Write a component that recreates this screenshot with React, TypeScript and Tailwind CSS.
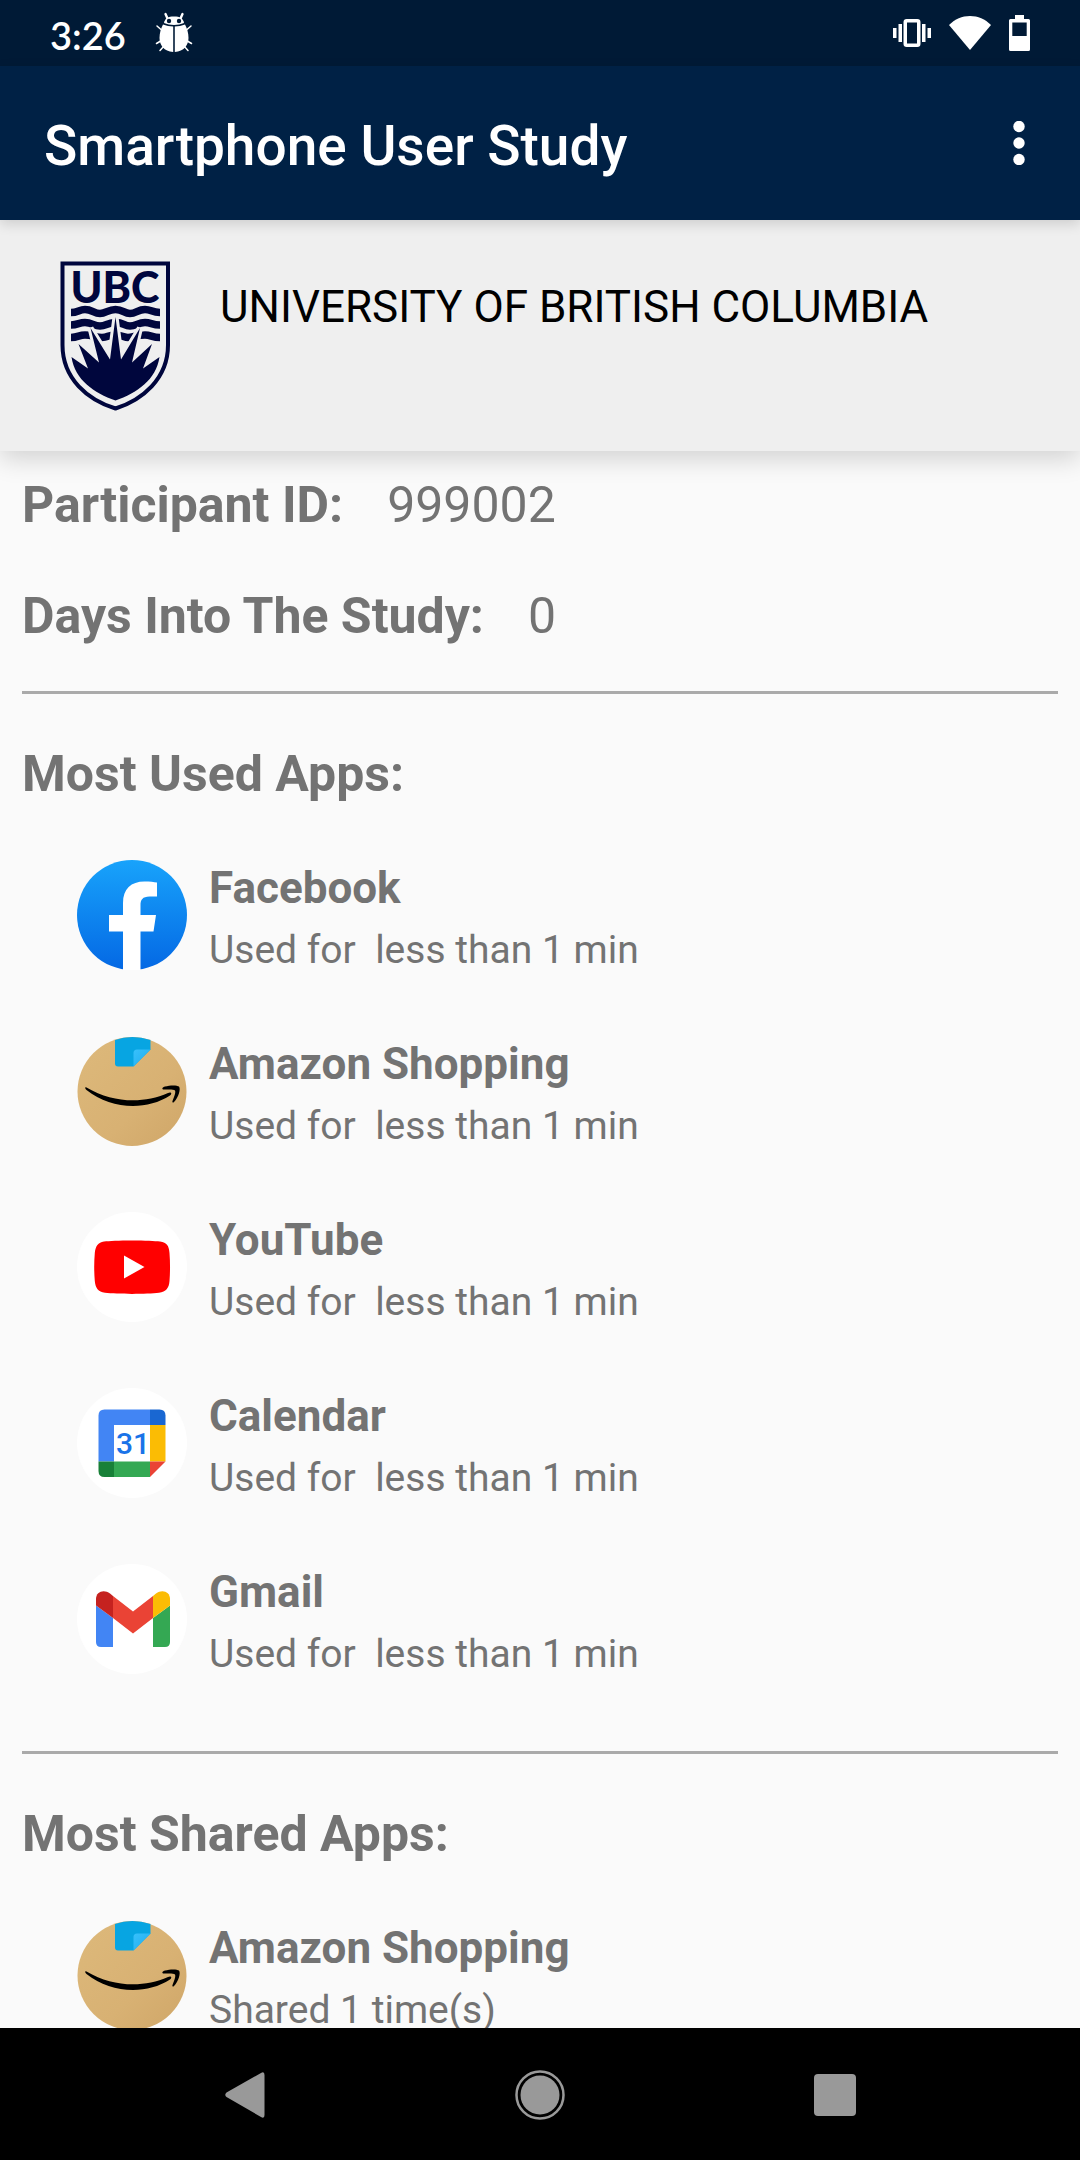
import React from "react";

function BugIcon() {
  return (
    <svg viewBox="0 0 38 42" className="h-[42px] w-[38px]" aria-hidden="true">
      <g stroke="#fff" strokeWidth="1.5" fill="none" strokeLinecap="round">
        <path d="M10.500 2l2 4.500M27.500 2l-2 4.500" strokeWidth="2.400" />
        <path d="M2 14l4 3.500M36 14l-4 3.500M1.500 31.500l5-3M36.500 31.500l-5-3M5 38.500l4-4.500M33 38.500l-4-4.500" />
      </g>
      <path d="M9 11C10 6 13 4.500 19 4.500S28 6 29 11C23 13.500 15 13.500 9 11z" fill="#fff" />
      <path d="M8 12.500c3 1.200 7 1.900 10.200 2V40C9 39.500 4.500 33 4.500 26c0-5 1.500-10 3.500-13.500zM30 12.500c-3 1.200-7 1.900-10.200 2V40C29 39.500 33.500 33 33.500 26c0-5-1.500-10-3.500-13.500z" fill="#fff" />
      <circle cx="14" cy="9" r="2.200" fill="#001a36" />
      <circle cx="24" cy="9" r="2.200" fill="#001a36" />
    </svg>
  );
}

function VibrateIcon() {
  return (
    <svg viewBox="0 0 38 28" className="h-[28px] w-[38px]" aria-hidden="true">
      <rect x="12.250" y="1.750" width="13.500" height="24.500" rx="1.500" fill="none" stroke="#fff" strokeWidth="3.500" />
      <path d="M0 9h3.500v10H0zM5.500 5H9v18H5.500zM29 5h3.500v18H29zM34.500 9H38v10h-3.500z" fill="#fff" />
    </svg>
  );
}

function WifiIcon() {
  return (
    <svg viewBox="0 0 42 34" className="h-[34px] w-[42px]" aria-hidden="true">
      <path d="M0 9C6 3 13 0 21 0s15 3 21 9L21 34z" fill="#fff" />
    </svg>
  );
}

function BatteryIcon() {
  return (
    <svg viewBox="0 0 21 36" className="h-[36px] w-[21px]" aria-hidden="true">
      <path fillRule="evenodd" d="M6 0h9v4h4.500Q21 4 21 5.500v29Q21 36 19.500 36h-18Q0 36 0 34.500v-29Q0 4 1.500 4H6zM3.300 7.500V21h14.400V7.500z" fill="#fff" />
    </svg>
  );
}

function UbcLogo() {
  return (
    <svg viewBox="0 0 110 150" className="h-[150px] w-[110px] shrink-0" role="img" aria-label="UBC crest">
      <path d="M2.500 2.500H108V84C108 118 82 139 55.500 147.500C28 139 2.500 118 2.500 84z" fill="none" stroke="#00063d" strokeWidth="4" />
      <text x="55" y="41.500" textAnchor="middle" fontFamily="Lato, sans-serif" fontWeight="900" fontSize="43" fill="#00063d">UBC</text>
      <g fill="none" stroke="#00063d" strokeWidth="7.500">
        <path d="M11 51.500C18 51.500 19 48.500 25 48.500C32 48.500 34 52.500 40 52.500S48 48.500 55.500 48.500S64 52.500 70 52.500S78 48.500 85 48.500C91 48.500 92 51.500 100 51.500" />
        <path d="M11 64C18 64 19 61.500 25 61.500C32 61.500 34 65 40 65S47 62 55 61.500S64 65 70 65S78 61.500 85 61.500C91 61.500 92 64 100 64" />
        <path d="M11 76.500C18 76.500 19 74 25 74C32 74 36 76.500 42 76.500S48 74 55 74S64 76.500 68 76.500S78 74 85 74C91 74 92 76.500 100 76.500" />
      </g>
      <path d="M55.500 56L61 98.500L80 67L72 101.500L92 83L83 107.500L99.500 96C96 119 77 132 55.500 139.500C34 132 15 119 11.500 96L28 107.500L18.500 83L39 101.500L30.500 67L50 98.500z" fill="#00063d" stroke="#efefef" strokeWidth="6" strokeMiterlimit="2" paintOrder="stroke" />
    </svg>
  );
}

function FacebookIcon() {
  return (
    <svg viewBox="0 0 110 110" className="size-full" aria-hidden="true">
      <defs>
        <linearGradient id="fb" x1="0" y1="0" x2="0" y2="1">
          <stop offset="0" stopColor="#18a3fb" />
          <stop offset="1" stopColor="#0468e4" />
        </linearGradient>
      </defs>
      <circle cx="55" cy="55" r="55" fill="url(#fb)" />
      <path d="M46 110V71.500H32V55H46V43C46 29 54 21.500 67.500 21.500C73 21.500 77 22 80 22.500V36.500H72.500C65.500 36.500 63.500 40 63.500 45V55H79L76.500 71.500H63.500V110Q55 111 46 110z" fill="#fff" />
    </svg>
  );
}

function AmazonIcon() {
  return (
    <svg viewBox="0 0 110 110" className="size-full" aria-hidden="true">
      <defs>
        <linearGradient id="box" x1="0" y1="0" x2="1" y2="1">
          <stop offset="0" stopColor="#ddb97b" />
          <stop offset="0.6" stopColor="#d8b173" />
          <stop offset="1" stopColor="#cfa668" />
        </linearGradient>
        <linearGradient id="fold" x1="0" y1="0" x2="1" y2="1">
          <stop offset="0" stopColor="#38c0fb" />
          <stop offset="1" stopColor="#1eaef0" />
        </linearGradient>
      </defs>
      <circle cx="55" cy="55.500" r="54.500" fill="url(#box)" />
      <path d="M38 4Q55-2 73.500 4V13.500L56.500 30.500H41Q38 30.500 38 27.500z" fill="#07a5e2" />
      <path d="M73.500 13.500H60Q56.500 13.500 56.500 17V30.500z" fill="url(#fold)" />
      <path d="M9.500 51.500C36 67 66 68 91 57C94 55.500 95.500 57.500 93 59.500C69 75 34 73.500 9.500 54C7.500 52 8 50.500 9.500 51.500z" fill="#000" />
      <path d="M86 53.500C84.500 52.500 86 51 88 50.500C93 49 100 49 102 50.500C104 53 101.500 61.500 97 66C96 67 95 66.500 95.500 65C97 61 99 56.500 98 54.500C96.500 53 91.500 53.500 86 53.500z" fill="#000" />
    </svg>
  );
}

function YouTubeIcon() {
  return (
    <svg viewBox="0 0 110 110" className="size-full" aria-hidden="true">
      <circle cx="55" cy="55" r="55" fill="#fff" />
      <path d="M55 28.500C68 28.500 78 29 83 29.500C90 30.500 92 34 92.500 41C93.200 50 93.200 60 92.500 69C92 76 89 80 82 80.800C70 82.300 40 82.300 28 80.800C21 80 18.500 76 17.800 69C17 60 17 50 17.800 41C18.500 34 21 30.500 27 29.500C32 29 42 28.500 55 28.500z" fill="#f00" />
      <path d="M47 43.500L67.500 55L47 66.500z" fill="#fff" />
    </svg>
  );
}

function CalendarIcon() {
  return (
    <svg viewBox="0 0 110 110" className="size-full" aria-hidden="true">
      <circle cx="55" cy="55" r="55" fill="#fff" />
      <path d="M27.500 21.500H73V37H37V73.500H21.500V27.500Q21.500 21.500 27.500 21.500z" fill="#4285f4" />
      <path d="M73 21.500H82.500Q88.500 21.500 88.500 27.500V37H73z" fill="#1967d2" />
      <path d="M73 37H88.500V73.500H73z" fill="#fbbc04" />
      <path d="M73 73.500H88.500L73 89z" fill="#ea4335" />
      <path d="M37 73.500H73V89H37z" fill="#34a853" />
      <path d="M21.500 73.500H37V89H27.500Q21.500 89 21.500 83z" fill="#188038" />
      <text x="56" y="66" textAnchor="middle" fontFamily="Roboto, sans-serif" fontWeight="500" fontSize="30" fill="#1a73e8">31</text>
    </svg>
  );
}

function GmailIcon() {
  return (
    <svg viewBox="0 0 110 110" className="size-full" aria-hidden="true">
      <circle cx="55" cy="55" r="55" fill="#fff" />
      <path d="M19 41.500L36 54V83H24Q19 83 19 78z" fill="#4285f4" />
      <path d="M76 54L93 41.500V78Q93 83 88 83H76z" fill="#34a853" />
      <path d="M36 32L56 47.500L76 32V54L56 69.500L36 54z" fill="#ea4335" />
      <path d="M19 41.500V35C19 27.500 27 25 33 29.500L36 32V54z" fill="#c5221f" />
      <path d="M93 41.500V35C93 27.500 85 25 79 29.500L76 32V54z" fill="#fbbc04" />
    </svg>
  );
}

type AppEntry = { name: string; detail: string; Icon: () => React.JSX.Element };

const usedApps: AppEntry[] = [
  { name: "Facebook", detail: "Used for  less than 1 min", Icon: FacebookIcon },
  { name: "Amazon Shopping", detail: "Used for  less than 1 min", Icon: AmazonIcon },
  { name: "YouTube", detail: "Used for  less than 1 min", Icon: YouTubeIcon },
  { name: "Calendar", detail: "Used for  less than 1 min", Icon: CalendarIcon },
  { name: "Gmail", detail: "Used for  less than 1 min", Icon: GmailIcon },
];

const sharedApps: AppEntry[] = [{ name: "Amazon Shopping", detail: "Shared 1 time(s)", Icon: AmazonIcon }];

function AppSection({ title, apps }: { title: string; apps: AppEntry[] }) {
  return (
    <section className="border-t-[3px] border-[#aaaaaa] pt-[50px]">
      <h2 className="mb-[56px] text-[50px] leading-[60px] font-bold">{title}</h2>
      <ul className="pl-[55px]">
        {apps.map(({ name, detail, Icon }) => (
          <li key={name} className="flex items-start gap-[22px] pb-[60px]">
            <div className="size-[110px] shrink-0">
              <Icon />
            </div>
            <div className="flex flex-col gap-2">
              <h3 className="text-[44px] leading-[56px] font-bold">{name}</h3>
              <p className="text-[39px] leading-[52px] whitespace-pre">{detail}</p>
            </div>
          </li>
        ))}
      </ul>
    </section>
  );
}

function Fact({ label, value }: { label: string; value: string }) {
  return (
    <div className="flex gap-[44px]">
      <dt className="font-bold">{label}</dt>
      <dd>{value}</dd>
    </div>
  );
}

export default function App() {
  return (
    <div className="flex h-screen flex-col overflow-hidden bg-[#fafafa] font-[Roboto,sans-serif] text-[#737373]">
      <div className="flex h-[66px] shrink-0 items-center justify-between bg-[#001a36] px-[50px] text-white">
        <div className="flex items-center gap-[29px]">
          <time className="pt-1 font-[Lato,sans-serif] text-[38px] leading-[44px] font-semibold">3:26</time>
          <BugIcon />
        </div>
        <div className="flex items-center gap-[18px]">
          <VibrateIcon />
          <WifiIcon />
          <BatteryIcon />
        </div>
      </div>

      <header className="z-20 flex h-[154px] shrink-0 items-center justify-between bg-[#002145] pr-[33px] pl-[44px] text-white shadow-[0_4px_12px_rgba(0,0,0,0.14)]">
        <h1 className="pt-1.5 text-[55px] leading-[64px] font-medium">Smartphone User Study</h1>
        <button type="button" aria-label="More options" className="flex h-[66px] w-[56px] items-center justify-center">
          <svg viewBox="0 0 12 44" className="h-[44px] w-[12px]" fill="#fff" aria-hidden="true">
            <circle cx="6" cy="5.500" r="5.700" />
            <circle cx="6" cy="22" r="5.700" />
            <circle cx="6" cy="38.500" r="5.700" />
          </svg>
        </button>
      </header>

      <div className="z-10 flex shrink-0 items-start gap-[50px] bg-[#efefef] pt-[41px] pr-[44px] pb-[40px] pl-[60px] text-black shadow-[0_8px_24px_rgba(0,0,0,0.16)]">
        <UbcLogo />
        <p className="pt-[20px] text-[44px] leading-[52px]">UNIVERSITY OF BRITISH COLUMBIA</p>
      </div>

      <main className="min-h-0 flex-1 overflow-x-hidden overflow-y-auto px-[22px] pt-[24px] [scrollbar-width:none]">
        <dl className="flex flex-col gap-[51px] pb-[45px] text-[50px] leading-[60px]">
          <Fact label="Participant ID:" value="999002" />
          <Fact label="Days Into The Study:" value="0" />
        </dl>
        <div className="flex flex-col gap-[11px]">
          <AppSection title="Most Used Apps:" apps={usedApps} />
          <AppSection title="Most Shared Apps:" apps={sharedApps} />
        </div>
      </main>

      <nav className="flex h-[132px] shrink-0 items-center justify-between bg-black px-[215px] pt-0.5">
        <button type="button" aria-label="Back" className="flex size-[60px] items-center justify-center">
          <svg viewBox="0 0 40 46" className="h-[46px] w-[40px]" fill="#999" aria-hidden="true">
            <path d="M1.500 20.500L36 1Q39.500-1 39.500 3V43Q39.500 47 36 45L1.500 25Q-1 22.750 1.500 20.500z" />
          </svg>
        </button>
        <button type="button" aria-label="Home" className="flex size-[60px] items-center justify-center">
          <svg viewBox="0 0 50 50" className="size-[50px]" aria-hidden="true">
            <circle cx="25" cy="25" r="23.500" fill="none" stroke="#999" strokeWidth="2.500" />
            <circle cx="25" cy="25" r="19.500" fill="#999" />
          </svg>
        </button>
        <button type="button" aria-label="Recent apps" className="flex size-[60px] items-center justify-center">
          <svg viewBox="0 0 42 42" className="size-[42px]" aria-hidden="true">
            <rect width="42" height="42" rx="4" fill="#999" />
          </svg>
        </button>
      </nav>
    </div>
  );
}
